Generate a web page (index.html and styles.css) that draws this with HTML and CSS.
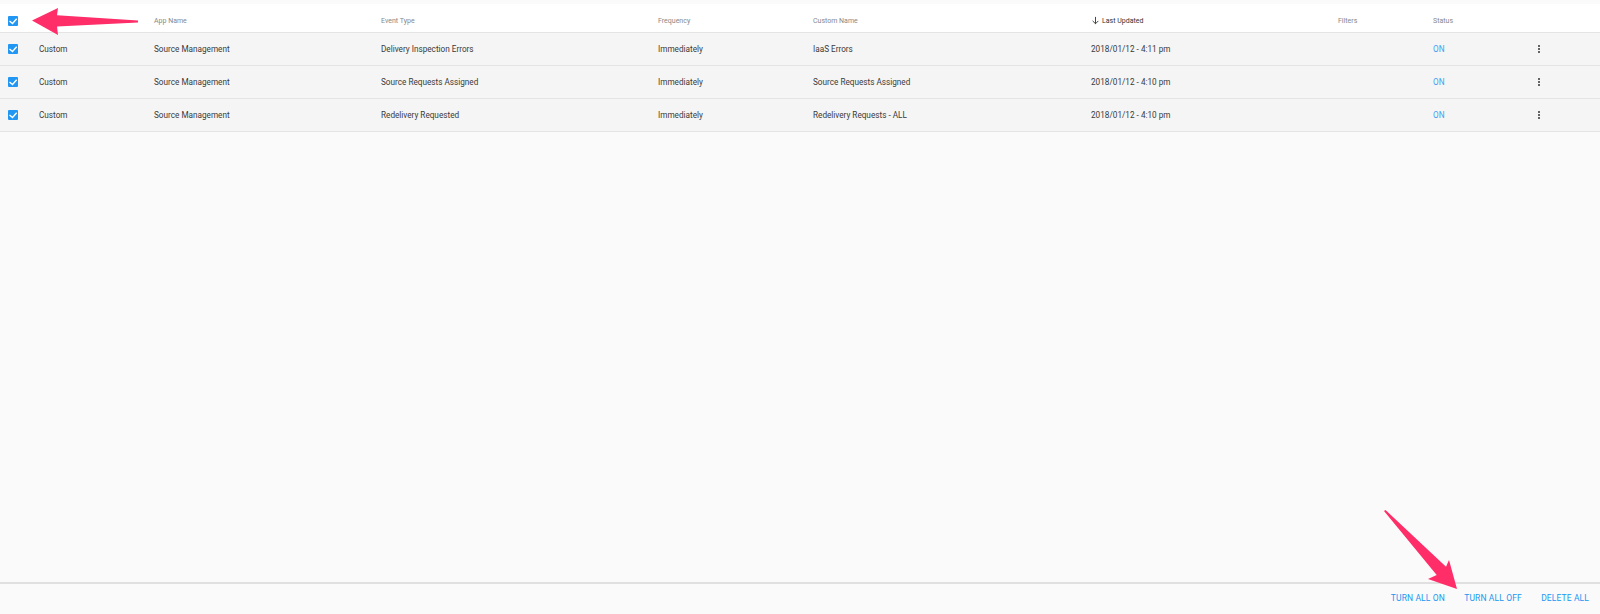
FILE: index.html
```html
<!DOCTYPE html>
<html lang="en">
<head>
    <meta charset="UTF-8">
    <title>Notifications</title>
    <link rel="stylesheet" href="styles.css">
</head>
<body>

<div class="page">
    <div class="table-wrap">
        <div class="row head">
            <span class="check"><svg viewBox="0 0 12 12"><path d="M1.8 6 5.4 9 10.4 3.4"/></svg></span>
            <span></span>
            <span>App Name</span>
            <span>Event Type</span>
            <span>Frequency</span>
            <span>Custom Name</span>
            <span class="sorted"><svg viewBox="0 0 10 10"><path d="M5 1v7.6M1.8 5.4 5 8.6l3.2-3.2"/></svg>Last Updated</span>
            <span>Filters</span>
            <span>Status</span>
            <span></span>
        </div>
        <div class="row">
            <span class="check"><svg viewBox="0 0 12 12"><path d="M1.8 6 5.4 9 10.4 3.4"/></svg></span>
            <span>Custom</span>
            <span>Source Management</span>
            <span>Delivery Inspection Errors</span>
            <span>Immediately</span>
            <span>IaaS Errors</span>
            <span>2018/01/12 - 4:11 pm</span>
            <span></span>
            <span class="on">ON</span>
            <span class="more"><i></i><i></i><i></i></span>
        </div>
        <div class="row">
            <span class="check"><svg viewBox="0 0 12 12"><path d="M1.8 6 5.4 9 10.4 3.4"/></svg></span>
            <span>Custom</span>
            <span>Source Management</span>
            <span>Source Requests Assigned</span>
            <span>Immediately</span>
            <span>Source Requests Assigned</span>
            <span>2018/01/12 - 4:10 pm</span>
            <span></span>
            <span class="on">ON</span>
            <span class="more"><i></i><i></i><i></i></span>
        </div>
        <div class="row">
            <span class="check"><svg viewBox="0 0 12 12"><path d="M1.8 6 5.4 9 10.4 3.4"/></svg></span>
            <span>Custom</span>
            <span>Source Management</span>
            <span>Redelivery Requested</span>
            <span>Immediately</span>
            <span>Redelivery Requests - ALL</span>
            <span>2018/01/12 - 4:10 pm</span>
            <span></span>
            <span class="on">ON</span>
            <span class="more"><i></i><i></i><i></i></span>
        </div>
    </div>

    <div class="footer">
        <a>TURN ALL ON</a>
        <a>TURN ALL OFF</a>
        <a>DELETE ALL</a>
    </div>
</div>

<!-- annotation arrows drawn over the screenshot -->
<svg class="arrows" viewBox="0 0 1600 614">
    <path d="M32 20.6 58 8 57 15.2 138 20.6 138 22.6 57 26.4 58 35Z"/>
    <path d="M1384 511 1385.5 510 1446 566.7 1449 560 1457 589 1428 579 1436.7 575Z"/>
</svg>

</body>
</html>
```

FILE: styles.css
```css
html, body {
    margin: 0;
    height: 100%;
}
body {
    font-family: 'Roboto', sans-serif;
    background: #fafafa;
    color: #3a3a3a;
    font-size: 8.2px;
}
.page {
    height: 614px;
    display: flex;
    flex-direction: column;
    padding-top: 4px;
    box-sizing: border-box;
}
.table-wrap {
    flex: 1;
}
.row {
    display: grid;
    grid-template-columns: 31px 115px 227px 277px 155px 278px 247px 95px 98px 16px;
    align-items: center;
    padding-left: 8px;
    height: 32px;
    background: #f5f5f5;
    border-bottom: 1px solid #e4e4e4;
}
.row.head {
    padding-top: 5px;
    height: 23px;
    background: #fff;
    color: #888;
    font-size: 7px;
}
.check {
    width: 10px;
    height: 10px;
    background: #2196f3;
    border-radius: 1px;
    display: block;
}
.check svg {
    display: block;
    width: 10px;
    height: 10px;
    fill: none;
    stroke: #fff;
    stroke-width: 1.7;
}
.sorted {
    display: flex;
    align-items: center;
    gap: 2px;
    color: #333;
}
.sorted svg {
    width: 9px;
    height: 9px;
    fill: none;
    stroke: #333;
    stroke-width: 1;
}
.on {
    color: #42a0f5;
}
.more {
    display: flex;
    flex-direction: column;
    align-items: center;
    gap: 1px;
}
.more i {
    width: 2px;
    height: 2px;
    background: #333;
    border-radius: 50%;
}
.footer {
    height: 32px;
    border-top: 2px solid #e0e0e0;
    display: flex;
    justify-content: flex-end;
    align-items: center;
    gap: 19.4px;
    padding: 0 11px 2px 0;
    box-sizing: border-box;
    color: #2196f3;
    font-size: 8.5px;
    letter-spacing: 0.12px;
}
.arrows {
    position: absolute;
    top: 0;
    left: 0;
    width: 1600px;
    height: 614px;
    fill: #ff2d68;
    pointer-events: none;
}
```
